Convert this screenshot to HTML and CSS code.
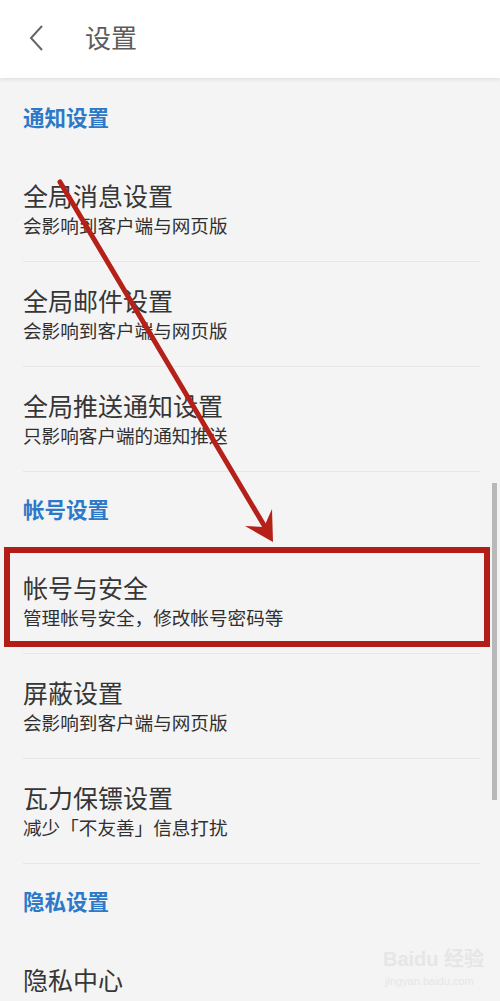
FILE: index.html
```html
<!DOCTYPE html>
<html lang="zh-CN">
<head>
  <meta charset="UTF-8" />
  <meta name="viewport" content="width=device-width, initial-scale=1.0"/>
  <title>设置</title>
  <link rel="stylesheet" href="styles.css">
</head>
<body>

  <header class="topbar">
    <svg class="back" width="20" height="30" viewBox="0 0 20 30">
      <polyline points="14,3 3,15 14,27" fill="none" stroke="#666" stroke-width="2" />
    </svg>
    <h1>设置</h1>
  </header>

  <div class="list">
    <div class="section">通知设置</div>
    <div class="item">
      <div class="title">全局消息设置</div>
      <div class="sub">会影响到客户端与网页版</div>
    </div>
    <div class="item">
      <div class="title">全局邮件设置</div>
      <div class="sub">会影响到客户端与网页版</div>
    </div>
    <div class="item">
      <div class="title">全局推送通知设置</div>
      <div class="sub">只影响客户端的通知推送</div>
    </div>

    <div class="section">帐号设置</div>
    <div class="item">
      <div class="title">帐号与安全</div>
      <div class="sub">管理帐号安全，修改帐号密码等</div>
    </div>
    <div class="item">
      <div class="title">屏蔽设置</div>
      <div class="sub">会影响到客户端与网页版</div>
    </div>
    <div class="item">
      <div class="title">瓦力保镖设置</div>
      <div class="sub">减少「不友善」信息打扰</div>
    </div>

    <div class="section">隐私设置</div>
    <div class="item last">
      <div class="title">隐私中心</div>
    </div>
  </div>

  <!-- 标注 -->
  <div class="highlight"></div>
  <svg class="arrow" width="500" height="1001" viewBox="0 0 500 1001">
    <line x1="60" y1="182" x2="268" y2="532" stroke="#b52019" stroke-width="5" stroke-linecap="round" />
    <polygon points="273,542 245,526 264,527 272,509" fill="#b52019" />
  </svg>
  <div class="scrollbar"></div>
  <div class="watermark">
    <span class="logo">Baidu 经验</span>
    <span class="url">jingyan.baidu.com</span>
  </div>

</body>
</html>
```

FILE: styles.css
```css
body {
  font-family: "Noto Sans CJK SC", "Noto Sans", sans-serif;
  margin: 0;
  padding: 0;
  background: #f4f4f4;
  width: 500px;
  height: 1001px;
  overflow: hidden;
  position: relative;
}

.topbar {
  height: 78px;
  background: #fff;
  display: flex;
  align-items: center;
  padding-left: 28px;
  box-shadow: 0 2px 4px rgba(0,0,0,0.08);
  position: relative;
}

.back {
  display: block;
  margin-top: -2px;
}

.topbar h1 {
  margin: -4px 0 0 37px;
  font-size: 26px;
  font-weight: normal;
  color: #5c5c5c;
  line-height: 1;
}

.list {
  padding-top: 2px;
}

.section {
  height: 77px;
  box-sizing: border-box;
  padding: 23px 0 0 23px;
  line-height: 28px;
  font-size: 21.5px;
  font-weight: bold;
  color: #2c79c9;
}

.item {
  margin: 0 20px 0 23px;
  height: 105px;
  box-sizing: border-box;
  padding-top: 23px;
  border-bottom: 1px solid #e6e6e6;
  color: #363636;
}

.item.last {
  height: 60px;
  border-bottom: none;
}

.title {
  font-size: 25px;
  line-height: 30px;
}

.sub {
  font-size: 18.6px;
  line-height: 30px;
  color: #303030;
}

.highlight {
  position: absolute;
  left: 4px;
  top: 547px;
  width: 486px;
  height: 100px;
  box-sizing: border-box;
  border: 6px solid #b21d17;
}

.arrow {
  position: absolute;
  left: 0;
  top: 0;
}

.scrollbar {
  position: absolute;
  left: 492px;
  top: 483px;
  width: 5px;
  height: 317px;
  background: #b9b9b9;
}

.watermark {
  position: absolute;
  left: 383px;
  top: 944px;
  color: #e6e6e6;
  font-family: "Liberation Sans", "Noto Sans CJK SC", sans-serif;
  white-space: nowrap;
}

.watermark .logo {
  display: block;
  font-size: 20px;
  font-weight: bold;
  line-height: 30px;
}

.watermark .url {
  display: block;
  font-size: 11px;
  line-height: 14px;
  padding-left: 2px;
}
```
